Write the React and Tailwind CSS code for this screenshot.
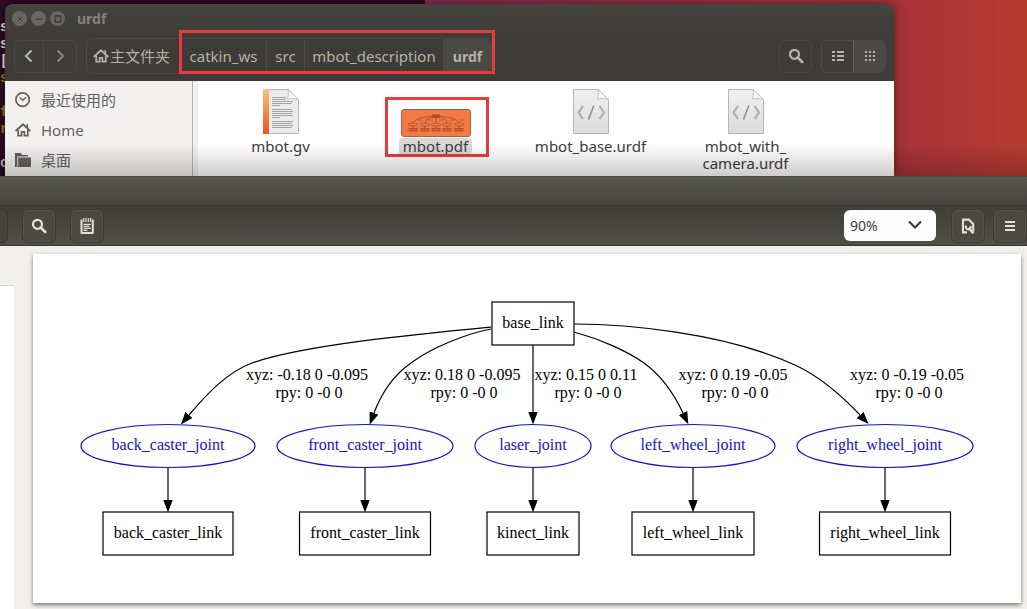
import { Minus, Square, X } from 'lucide-react';

const TERMINAL_LINES = [
  { text: 's', color: 'text-[#eeeeec]' },
  { text: 's', color: 'text-[#eeeeec]' },
  { text: '[', color: 'text-[#eeeeec]' },
  { text: 's', color: 'text-[#a88410]' },
  { text: '', color: '' },
  { text: 'f', color: 'text-[#a88410]' },
  { text: 'r', color: 'text-[#a88410]' },
  { text: '', color: '' },
  { text: 'c', color: 'text-[#d6ccd3]' },
];

const EDGES = [
  'M458 73 C385 80 270 91 219 109 C194 118 173 141 156 161',
  'M458 75 C432 80 398 94 378 109 C358 123 347 143 341 159',
  'M500 91 V158',
  'M541 78 C567 85 594 97 611 109 C629 122 642 142 650 159',
  'M541 70 C590 70 690 78 762 111 C786 122 810 143 827 161',
];

const BRANCHES = [
  { joint: 'back_caster_joint', link: 'back_caster_link', xyz: '-0.18 0 -0.095', cx: 135, rx: 87, width: 130, labelX: 274 },
  { joint: 'front_caster_joint', link: 'front_caster_link', xyz: '0.18 0 -0.095', cx: 332, rx: 88, width: 131, labelX: 429 },
  { joint: 'laser_joint', link: 'kinect_link', xyz: '0.15 0 0.11', cx: 500, rx: 58, width: 92, labelX: 553 },
  { joint: 'left_wheel_joint', link: 'left_wheel_link', xyz: '0 0.19 -0.05', cx: 660, rx: 82, width: 122, labelX: 700 },
  { joint: 'right_wheel_joint', link: 'right_wheel_link', xyz: '0 -0.19 -0.05', cx: 852, rx: 88, width: 131, labelX: 874 },
];

function SearchIcon() {
  return (
    <svg className="size-4" viewBox="0 0 16 16" fill="none" stroke="currentColor">
      <circle cx="6.5" cy="6.3" r="4.5" strokeWidth="2.2" />
      <path d="M9.7 9.5 L14.2 14" strokeWidth="2.6" strokeLinecap="round" />
    </svg>
  );
}

function HomeIcon() {
  return (
    <svg className="size-4 shrink-0" viewBox="0 0 16 16" fill="none" stroke="currentColor">
      <path d="M0.6 9 L8 2.2 L15.4 9" strokeWidth="1.9" />
      <path d="M3.2 7.5 V13.6 H6.6 V9.8 H9.4 V13.6 H12.8 V7.5" strokeWidth="1.7" />
      <path d="M12.2 2.2 V5.8" strokeWidth="1.8" />
    </svg>
  );
}

function ClockIcon() {
  return (
    <svg className="size-4 shrink-0" viewBox="0 0 16 16" fill="none" stroke="currentColor">
      <circle cx="7.6" cy="7.6" r="6.7" strokeWidth="1.7" />
      <path d="M4.6 5.4 L7.7 8.2 L11.2 5.2" strokeWidth="1.4" />
    </svg>
  );
}

function FolderIcon() {
  return (
    <svg className="size-4 shrink-0" viewBox="0 0 16 16" fill="currentColor">
      <path d="M0 1 H6 L7 3 H13 V4.5 H2.3 V13 L1.5 15 H0 Z" />
      <path d="M3.2 5.5 H16 V15 H2 L3.2 13.5 Z" />
    </svg>
  );
}

function NotepadIcon() {
  return (
    <svg className="size-[18px]" viewBox="0 0 18 18" fill="none" stroke="currentColor">
      <path d="M3.5 2.5 V16 H14.8 V2.5" strokeWidth="2" strokeLinejoin="round" />
      <path d="M5.7 1 V5 M7.9 1 V5 M10.3 1 V5 M12.6 1 V5" strokeWidth="1.2" />
      <path d="M5.5 7.3 H12.8 M5.5 9.3 H11.5 M5.5 11.3 H12.8 M5.5 13.3 H9.5" strokeWidth="1.2" />
    </svg>
  );
}

function PageToolsIcon() {
  return (
    <svg className="size-4" viewBox="0 0 16 16" fill="none" stroke="currentColor">
      <path d="M7 14.4 H3 V1.6 H8.8 L13.2 6 V13.4" strokeWidth="2.1" />
      <path d="M8.6 9.8 L13.4 15.4" strokeWidth="2.4" />
      <path d="M6.3 7.6 A2.4 2.4 0 1 0 10.4 8" strokeWidth="1.9" />
    </svg>
  );
}

function CodeFileIcon() {
  return (
    <svg className="h-[47px] w-[38px]" viewBox="0 0 38 47">
      <defs>
        <linearGradient id="codePage" x1="0" y1="0" x2="0" y2="1">
          <stop offset="0" stopColor="#f0f0f0" />
          <stop offset="1" stopColor="#dcdcdc" />
        </linearGradient>
      </defs>
      <path d="M1.5 1.5 H26 L36.5 11.5 V45.5 H1.5 Z" fill="url(#codePage)" stroke="#b4b4b4" />
      <path d="M26 1.5 Q27 9 25 11 Q30 9.5 36.5 11.5 Z" fill="#fafafa" stroke="#c4c4c4" />
      <path d="M11 18 L6.5 24.5 L11 31 M27.5 18 L32 24.5 L27.5 31" fill="none" stroke="#b2b2b2" strokeWidth="2.2" />
      <path d="M21.8 17.5 L16.5 31.5" stroke="#8c8c8c" strokeWidth="1.5" />
    </svg>
  );
}

function TextFileIcon() {
  const lines = [9, 11, 13, 15, 17, 21, 23, 25, 27, 29, 33, 35, 37, 39];
  return (
    <svg className="h-[47px] w-[38px]" viewBox="0 0 38 47">
      <defs>
        <linearGradient id="spine" x1="0" y1="0" x2="0" y2="1">
          <stop offset="0" stopColor="#f6c57c" />
          <stop offset="1" stopColor="#ea5420" />
        </linearGradient>
      </defs>
      <path d="M1.5 1.5 H26 L36.5 11.5 V45.5 H1.5 Z" fill="#ececec" stroke="#b4b4b4" />
      <rect x="1" y="1" width="6" height="45" fill="url(#spine)" />
      <path d="M26 1.5 Q27 9 25 11 Q30 9.5 36.5 11.5 Z" fill="#fafafa" stroke="#c0c0c0" />
      {lines.map((y, i) => (
        <path key={y} d={`M10 ${y}.5 H${y < 12 ? 24 : i % 5 === 4 ? 18 : 31 - (i % 2)}`} stroke="#9b9b9b" strokeWidth="0.9" />
      ))}
    </svg>
  );
}

function PdfThumbnail() {
  return (
    <svg className="h-7 w-[70px]" viewBox="0 0 70 28" fill="none" stroke="#a84a26" strokeWidth="0.8">
      <rect x="0.5" y="0.5" width="69" height="27" rx="2.5" fill="#f17a47" stroke="#b0603e" strokeWidth="1" />
      <rect x="31.5" y="6" width="7" height="2.5" fill="#a84a26" />
      <path d="M32 7.5 Q14 8 12 14 M32 7.5 Q25 9 24 14 M35 9 V14 M39 7.5 Q45 9 46 14 M39 7.5 Q56 8 58 14" />
      <path d="M16 11 H22 M26 11 H32 M38 11 H43 M48 11 H54 M59 11 H64" strokeWidth="0.7" />
      {[12, 24, 35, 46, 58].map((x) => (
        <g key={x}>
          <ellipse cx={x} cy="15.5" rx="5" ry="1.5" />
          <path d={`M${x} 17 V19.5`} />
          <rect x={x - 4} y="19.5" width="8" height="2.5" fill="#d56236" />
        </g>
      ))}
    </svg>
  );
}

function WindowButton({ label, children }) {
  return (
    <button aria-label={label} className="flex size-[15px] items-center justify-center rounded-full bg-[#686761] text-[#3b3a35]">
      {children}
    </button>
  );
}

function Crumb({ children, className }) {
  return (
    <button className={`flex items-center justify-center border-l border-[#4b4a45] ${className}`}>{children}</button>
  );
}

function FileItem({ icon, children }) {
  return (
    <div className="flex w-[155px] flex-col items-center text-center leading-[17px]">
      <div className="flex h-[50px] items-start">{icon}</div>
      <span className="block">{children}</span>
    </div>
  );
}

function FileManager() {
  return (
    <section className="relative mr-[133px] ml-[5px] overflow-hidden rounded-t-lg bg-[#3d3c38] text-[15px] shadow-[0_0_12px_rgba(0,0,0,0.5)]">
      <header className="flex h-[29px] items-center gap-1 bg-linear-to-b from-[#45443f] to-[#3e3d39] pl-[7px]">
        <WindowButton label="Close"><X size={8} strokeWidth={3} /></WindowButton>
        <WindowButton label="Minimize"><Minus size={10} strokeWidth={3} /></WindowButton>
        <WindowButton label="Maximize"><Square size={8} strokeWidth={4} /></WindowButton>
        <h1 className="pl-2 text-[14px] font-bold text-[#85837b]">urdf</h1>
      </header>

      <div className="flex h-12 items-center pr-[8px] pb-[2px] pl-[9px] text-[#b5b3aa]">
        <div className="flex h-[33px] rounded-md border border-[#4a4944]">
          <button aria-label="Back" className="flex w-[28px] items-center justify-center">
            <svg className="size-4" viewBox="0 0 16 16" fill="none" stroke="currentColor" strokeWidth="2.2">
              <path d="M10.5 2.5 L5 8 L10.5 13.5" />
            </svg>
          </button>
          <button aria-label="Forward" className="flex w-[33px] items-center justify-center border-l border-[#4a4944] text-[#86847d]">
            <svg className="size-4" viewBox="0 0 16 16" fill="none" stroke="currentColor" strokeWidth="2.2">
              <path d="M5.5 2.5 L11 8 L5.5 13.5" />
            </svg>
          </button>
        </div>

        <nav className="ml-[9px] flex h-9 rounded-md border-y border-r border-[#484742]">
          <Crumb className="w-[94px] gap-px rounded-l-md pr-1">
            <HomeIcon />
            <span>主文件夹</span>
          </Crumb>
          <div className="relative flex">
            <Crumb className="w-[86px]">catkin_ws</Crumb>
            <Crumb className="w-[38px]">src</Crumb>
            <Crumb className="w-[139px]">mbot_description</Crumb>
            <Crumb className="w-[48px] rounded-r-md bg-[#4a4944] text-[14px] font-bold">urdf</Crumb>
            <div className="pointer-events-none absolute -top-[9px] -right-1 -bottom-px -left-px border-3 border-[#e93c3c]" />
          </div>
        </nav>

        <button aria-label="Search" className="ml-auto flex size-[33px] items-center justify-center rounded-md border border-[#484742]">
          <SearchIcon />
        </button>
        <div className="ml-[9px] flex h-[33px] overflow-hidden rounded-md border border-[#4b4a45]">
          <button aria-label="List view" className="flex w-[31px] items-center justify-center">
            <svg className="size-3" viewBox="0 0 12 12" fill="currentColor">
              <path d="M0 1h3v2H0z M5 1h7v2H5z M0 5h3v2H0z M5 5h7v2H5z M0 9h3v2H0z M5 9h7v2H5z" />
            </svg>
          </button>
          <button aria-label="Icon view" className="flex w-8 items-center justify-center border-l border-[#66655e] bg-[#4a4943]">
            <svg className="size-3" viewBox="0 0 12 12" fill="currentColor">
              <path d="M1 1h2v2H1z M5 1h2v2H5z M9 1h2v2H9z M1 5h2v2H1z M5 5h2v2H5z M9 5h2v2H9z M1 9h2v2H1z M5 9h2v2H5z M9 9h2v2H9z" />
            </svg>
          </button>
        </div>
      </div>

      <div className="flex bg-white text-[#3c3c3c]">
        <aside className="w-[188px] shrink-0 border-r border-[#b5b4b2] bg-[#f2f1f0] pt-1 text-[#62615e]">
          <a href="#recent" className="flex h-[30px] items-center gap-[10px] pl-[10px]"><ClockIcon />最近使用的</a>
          <a href="#home" className="flex h-[30px] items-center gap-[10px] pl-[10px]"><HomeIcon />Home</a>
          <a href="#desktop" className="flex h-[30px] items-center gap-[10px] pl-[10px]"><FolderIcon />桌面</a>
        </aside>
        <div className="w-[5px] shrink-0 bg-[#f2f1f0]" />
        <div className="flex grow pt-[7px] pb-1 pl-[5px]">
          <FileItem icon={<TextFileIcon />}>mbot.gv</FileItem>
          <div className="relative">
            <FileItem icon={<div className="pt-[21px]"><PdfThumbnail /></div>}>
              <span className="inline-block rounded-sm bg-[#dad8d6] px-1">mbot.pdf</span>
            </FileItem>
            <div className="pointer-events-none absolute top-[9px] right-6 left-[27px] h-[60px] border-3 border-[#e93c3c]" />
          </div>
          <FileItem icon={<CodeFileIcon />}>mbot_base.urdf</FileItem>
          <FileItem icon={<CodeFileIcon />}>mbot_with_<br />camera.urdf</FileItem>
        </div>
      </div>
    </section>
  );
}

function LinkGraph() {
  return (
    <svg
      className="block h-auto w-full font-['Liberation_Serif',serif] text-[16px]"
      viewBox="0 0 988 349"
      textAnchor="middle"
      role="img"
      aria-label="Robot link tree"
    >
      <defs>
        <marker id="arrow" markerUnits="userSpaceOnUse" markerWidth="14" markerHeight="10" refX="0" refY="5" orient="auto">
          <path d="M0 0.3 L12.5 5 L0 9.7 Z" />
        </marker>
      </defs>
      <g fill="none" stroke="black" strokeWidth="1.2">
        {EDGES.map((d) => (
          <path key={d} d={d} markerEnd="url(#arrow)" />
        ))}
        <rect x="459" y="48" width="82" height="43" />
      </g>
      <text x="500" y="74">base_link</text>

      {BRANCHES.map(({ joint, link, xyz, cx, rx, width, labelX }) => (
        <g key={joint}>
          <text x={labelX} y="126">xyz: {xyz}</text>
          <text x={labelX + 2} y="144">rpy: 0 -0 0</text>
          <ellipse cx={cx} cy="192" rx={rx} ry="21.5" fill="none" stroke="#1414c8" strokeWidth="1.2" />
          <text x={cx} y="196" fill="#1414c8">{joint}</text>
          <path d={`M${cx} 214 V246`} stroke="black" strokeWidth="1.2" markerEnd="url(#arrow)" />
          <rect x={cx - width / 2} y="258" width={width} height="43" fill="none" stroke="black" strokeWidth="1.2" />
          <text x={cx} y="284">{link}</text>
        </g>
      ))}
    </svg>
  );
}

function ToolButton({ label, className = '', children }) {
  return (
    <button
      aria-label={label}
      className={`flex size-[34px] shrink-0 items-center justify-center rounded-md border border-[#3a3934] bg-[#4a4943] shadow-[inset_0_0_0_1px_rgba(255,255,255,0.05)] ${className}`}
    >
      {children}
    </button>
  );
}

function DocumentViewer() {
  return (
    <section className="relative flex grow flex-col bg-[#f1f0ef]">
      <header className="h-[29px] border-t border-[#4b4a44] bg-linear-to-b from-[#5a594f] to-[#454440]" />
      <div className="flex h-[41px] items-center border-t border-b border-t-[#35342f] border-b-[#35342f] bg-linear-to-b from-[#3f3e39] to-[#504f48] text-[#e2e0d9]">
        <div className="h-[34px] w-2 rounded-r-md border border-l-0 border-[#35342f] bg-[#45443e]" />
        <ToolButton label="Find" className="ml-[14px]"><SearchIcon /></ToolButton>
        <ToolButton label="Annotations" className="ml-[14px]"><NotepadIcon /></ToolButton>
        <div className="relative mr-[15px] ml-auto text-[#3c3c3c]">
          <select aria-label="Zoom" className="block h-[31px] w-[92px] appearance-none rounded-md bg-[#fcfcfc] pl-[6px] text-[14px]">
            <option>90%</option>
          </select>
          <svg className="pointer-events-none absolute top-2 right-[14px] size-[14px]" viewBox="0 0 14 14" fill="none" stroke="currentColor" strokeWidth="2.2">
            <path d="M1 3.5 L7 9.5 L13 3.5" />
          </svg>
        </div>
        <ToolButton label="Page tools" className="mr-2"><PageToolsIcon /></ToolButton>
        <ToolButton label="Menu">
          <svg className="size-3" viewBox="0 0 12 12" fill="currentColor">
            <path d="M1 1h10v2H1z M1 5h10v2H1z M1 9h10v2H1z" />
          </svg>
        </ToolButton>
      </div>

      <div className="flex grow">
        <aside className="flex w-[14px] shrink-0 flex-col pt-[39px]">
          <div className="grow border-t border-[#d9d8d6] bg-white" />
        </aside>
        <main className="grow pt-2 pr-[6px] pb-[6px] pl-[19px]">
          <div className="bg-white shadow-[0_2px_4px_rgba(0,0,0,0.5)]">
            <LinkGraph />
          </div>
        </main>
      </div>
    </section>
  );
}

export default function App() {
  return (
    <div className="flex min-h-screen flex-col overflow-hidden font-['Noto_Sans','Noto_Sans_CJK_SC',sans-serif]">
      <div className="relative bg-linear-to-r from-[#8a2a52] from-40% via-[#a83339] via-88% to-[#b73c30] pt-1">
        {/* terminal peeking out behind the file manager */}
        <div className="absolute inset-y-0 left-0 w-[425px] overflow-hidden bg-[#300a24] pt-[19px] font-['Liberation_Mono',monospace] text-[14px] leading-[17px] font-bold">
          {TERMINAL_LINES.map((line, i) => (
            <div key={i} className={`h-[17px] ${line.color}`}>{line.text}</div>
          ))}
        </div>
        <FileManager />
        {/* shade cast upwards by the viewer window */}
        <div className="pointer-events-none absolute inset-x-0 bottom-0 h-8 bg-linear-to-b from-transparent to-black/20" />
      </div>
      <DocumentViewer />
    </div>
  );
}
